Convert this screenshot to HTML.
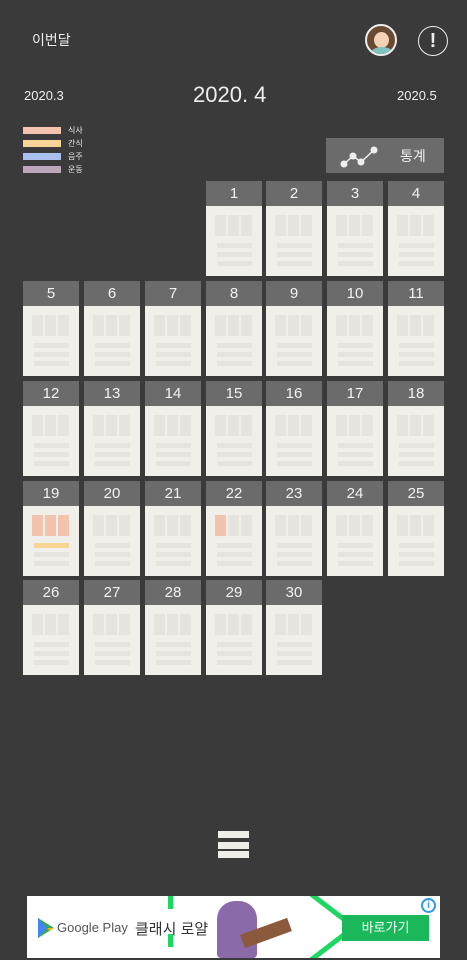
<!DOCTYPE html>
<html><head><meta charset="utf-8"><style>
*{margin:0;padding:0;box-sizing:border-box}
body{width:467px;height:960px;background:#3a3a3a;font-family:"Liberation Sans","Noto Sans CJK KR",sans-serif;color:#eee;position:relative;overflow:hidden}
.a{position:absolute}
.cell{position:absolute;width:56px;height:95px}
.hd{height:25px;background:#6b6b6b;color:#f2f2f2;font-size:15px;text-align:center;line-height:26px}
.bd{height:70px;background:#f0efea;position:relative}
.b{position:absolute;top:9px;width:11px;height:21px;background:#e6e5dd}
.l{position:absolute;left:11px;width:35px;height:5px;background:#e6e5dd}
</style></head><body>
<div class="a" style="left:32px;top:30px;font-size:14px">이번달</div>
<div class="a" style="left:365px;top:24px;width:32px;height:32px;border-radius:50%;background:#6b4a32;border:2px solid #eee;overflow:hidden"><div class="a" style="left:7px;top:6px;width:15px;height:16px;border-radius:50%;background:#f3d2b8"></div><div class="a" style="left:4px;top:21px;width:22px;height:12px;border-radius:50% 50% 0 0;background:#7fc4c0"></div></div>
<div class="a" style="left:418px;top:26px;width:30px;height:30px;border-radius:50%;border:1.5px solid #eee;text-align:center;font-size:20px;line-height:28px;font-weight:bold">!</div>
<div class="a" style="left:24px;top:88px;font-size:13px">2020.3</div>
<div class="a" style="left:193px;top:82px;font-size:22px">2020. 4</div>
<div class="a" style="left:397px;top:88px;font-size:13px">2020.5</div>
<div class="a" style="left:23px;top:127px;width:38px;height:7px;background:#f4c3ae"></div>
<div class="a" style="left:23px;top:140px;width:38px;height:7px;background:#f8d596"></div>
<div class="a" style="left:23px;top:153px;width:38px;height:7px;background:#a9bfee"></div>
<div class="a" style="left:23px;top:166px;width:38px;height:7px;background:#bba6bc"></div>
<div class="a" style="left:68px;top:124px;font-size:8px;line-height:13px">식사<br>간식<br>음주<br>운동</div>
<div class="a" style="left:326px;top:138px;width:118px;height:35px;background:#6b6b6b">
<svg class="a" style="left:12px;top:4px" width="46" height="28"><polyline points="6,22 15,14 23,20 36,8" fill="none" stroke="#eee" stroke-width="1.5"/><circle cx="6" cy="22" r="3.5" fill="#eee"/><circle cx="15" cy="14" r="3.5" fill="#eee"/><circle cx="23" cy="20" r="3.5" fill="#eee"/><circle cx="36" cy="8" r="3.5" fill="#eee"/></svg>
<div class="a" style="left:74px;top:8px;font-size:14px">통계</div></div>
<div id="g"></div>
<div class="a" style="left:218px;top:831px;width:31px;height:7px;background:#eeede8"></div>
<div class="a" style="left:218px;top:842px;width:31px;height:7px;background:#eeede8"></div>
<div class="a" style="left:218px;top:851px;width:31px;height:7px;background:#eeede8"></div>
<div class="a" style="left:27px;top:896px;width:413px;height:62px;background:#fff;overflow:hidden">
<div class="a" style="left:141px;top:0;width:5px;height:62px;background:repeating-linear-gradient(#1ed760 0 13px,transparent 13px 38px)"></div>
<svg class="a" style="left:230px;top:0" width="110" height="62"><polyline points="50,-5 97,31 50,67" fill="none" stroke="#1ed760" stroke-width="5"/></svg>
<div class="a" style="left:190px;top:5px;width:40px;height:57px;background:#8a6aa8;border-radius:18px 18px 4px 4px"></div>
<div class="a" style="left:214px;top:30px;width:50px;height:14px;background:#8b5a3c;transform:rotate(-20deg)"></div>
<svg class="a" style="left:10px;top:22px" width="18" height="20"><polygon points="1,0 17,10 1,20" fill="#34a853"/><polygon points="1,0 10,10 1,20" fill="#4285f4"/><polygon points="10,10 17,10 13,13" fill="#fbbc04"/></svg>
<div class="a" style="left:30px;top:24px;font-size:13px;color:#555">Google Play</div>
<div class="a" style="left:108px;top:22px;font-size:15px;color:#333">클래시 로얄</div>
<div class="a" style="left:315px;top:19px;width:87px;height:26px;background:#1ab85a;color:#fff;font-size:13px;text-align:center;line-height:26px">바로가기</div>
<div class="a" style="left:394px;top:2px;width:15px;height:15px;border-radius:50%;border:2px solid #2a9be0;color:#2a9be0;font-size:10px;text-align:center;line-height:11px;font-weight:bold">i</div>
</div>
<script>
var xs=[23,84,145,206,266,327,388],ys=[181,281,381,481,580],h='';
for(var d=1;d<=30;d++){var i=d+2,c=i%7,r=Math.floor(i/7);
var b1='#e6e5dd',b2=b1,b3=b1,l1=b1;
if(d==19){b1=b2=b3='#f4c3ae';l1='#f8d596'}if(d==22)b1='#f4c3ae';
h+='<div class="cell" style="left:'+xs[c]+'px;top:'+ys[r]+'px"><div class="hd">'+d+'</div><div class="bd">'+
'<div class="b" style="left:9px;background:'+b1+'"></div><div class="b" style="left:22px;background:'+b2+'"></div><div class="b" style="left:35px;background:'+b3+'"></div>'+
'<div class="l" style="top:37px;background:'+l1+'"></div><div class="l" style="top:46px"></div><div class="l" style="top:55px"></div></div></div>';}
document.getElementById('g').innerHTML=h;
</script>
</body></html>
